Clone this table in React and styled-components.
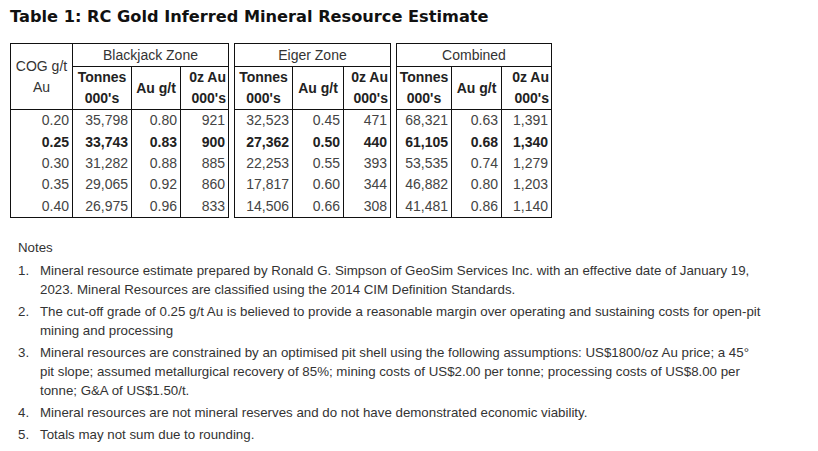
import React from "react";
import styled, { createGlobalStyle } from "styled-components";

const Global = createGlobalStyle`
  html, body { margin: 0; padding: 0; background: #fff; }
  body { font-family: "Liberation Sans", Arial, sans-serif; color: #333; }
`;

const Page = styled.div`
  width: 818px;
  height: 451px;
  box-sizing: border-box;
  padding: 6px 0 0 10px;
  overflow: hidden;
`;

const Title = styled.h1`
  margin: 0;
  font-family: "DejaVu Sans", Verdana, sans-serif;
  font-weight: bold;
  font-size: 16.2px;
  line-height: 22px;
  color: #111;
`;

const Tables = styled.div`
  display: flex;
  gap: 5px;
  margin-top: 15px;
  align-items: flex-start;
`;

const Table = styled.table`
  border-collapse: collapse;
  border: 1px solid #111;
  font-size: 14px;
  color: #333;
  table-layout: fixed;
`;

const Th = styled.th`
  border: 1px solid #111;
  font-weight: ${(p) => (p.$bold ? "bold" : "normal")};
  text-align: ${(p) => p.$align || "center"};
  padding: 0 2px;
  height: ${(p) => p.$h}px;
  line-height: 21px;
  vertical-align: middle;
  white-space: nowrap;
  color: ${(p) => (p.$bold ? "#222" : "#333")};
  box-sizing: border-box;
`;

const Td = styled.td`
  border-left: 1px solid #111;
  border-right: 1px solid #111;
  text-align: right;
  padding: 0 3px;
  height: 21.4px;
  line-height: 21px;
  font-weight: ${(p) => (p.$bold ? "bold" : "normal")};
  color: ${(p) => (p.$bold ? "#222" : "#444")};
`;

const Notes = styled.div`
  margin-top: 20px;
  padding-left: 8px;
  font-size: 13.3px;
  color: #333;
  line-height: 19px;
`;

const NotesHead = styled.div`
  margin-bottom: 4px;
`;

const List = styled.div`
  display: flex;
  flex-direction: column;
  gap: 3px;
  width: 747px;
`;

const Item = styled.div`
  display: flex;
`;

const Num = styled.span`
  flex: 0 0 22px;
`;

const Text = styled.span`
  flex: 1;
`;

const rows = [
  ["0.20", "35,798", "0.80", "921", "32,523", "0.45", "471", "68,321", "0.63", "1,391"],
  ["0.25", "33,743", "0.83", "900", "27,362", "0.50", "440", "61,105", "0.68", "1,340", true],
  ["0.30", "31,282", "0.88", "885", "22,253", "0.55", "393", "53,535", "0.74", "1,279"],
  ["0.35", "29,065", "0.92", "860", "17,817", "0.60", "344", "46,882", "0.80", "1,203"],
  ["0.40", "26,975", "0.96", "833", "14,506", "0.66", "308", "41,481", "0.86", "1,140"],
];

const notes = [
  "Mineral resource estimate prepared by Ronald G. Simpson of GeoSim Services Inc. with an effective date of January 19, 2023. Mineral Resources are classified using the 2014 CIM Definition Standards.",
  "The cut-off grade of 0.25 g/t Au is believed to provide a reasonable margin over operating and sustaining costs for open-pit mining and processing",
  "Mineral resources are constrained by an optimised pit shell using the following assumptions: US$1800/oz Au price; a 45° pit slope; assumed metallurgical recovery of 85%; mining costs of US$2.00 per tonne; processing costs of US$8.00 per tonne; G&A of US$1.50/t.",
  "Mineral resources are not mineral reserves and do not have demonstrated economic viability.",
  "Totals may not sum due to rounding.",
];

const ZoneTable = ({ name, widths, cols, withCog }) => (
  <Table>
    <colgroup>
      {widths.map((w, i) => (
        <col key={i} style={{ width: w }} />
      ))}
    </colgroup>
    <thead>
      <tr>
        {withCog && (
          <Th rowSpan={2} $h={23}>
            COG g/t
            <br />
            Au
          </Th>
        )}
        <Th colSpan={3} $h={23}>
          {name}
        </Th>
      </tr>
      <tr>
        <Th $bold $h={42}>
          Tonnes
          <br />
          000's
        </Th>
        <Th $bold $h={42}>
          Au g/t
        </Th>
        <Th $bold $align="right" $h={42}>
          0z Au
          <br />
          000's
        </Th>
      </tr>
    </thead>
    <tbody>
      {rows.map((r, i) => (
        <tr key={i}>
          {cols.map((c) => (
            <Td key={c} $bold={r[10]}>
              {r[c]}
            </Td>
          ))}
        </tr>
      ))}
    </tbody>
  </Table>
);

export default function App() {
  return (
    <Page>
      <Global />
      <Title>Table 1: RC Gold Inferred Mineral Resource Estimate</Title>
      <Tables>
        <ZoneTable
          name="Blackjack Zone"
          withCog
          widths={[62, 59, 49, 48]}
          cols={[0, 1, 2, 3]}
        />
        <ZoneTable name="Eiger Zone" widths={[58, 51, 47]} cols={[4, 5, 6]} />
        <ZoneTable name="Combined" widths={[55, 50, 50]} cols={[7, 8, 9]} />
      </Tables>
      <Notes>
        <NotesHead>Notes</NotesHead>
        <List>
          {notes.map((n, i) => (
            <Item key={i}>
              <Num>{i + 1}.</Num>
              <Text>{n}</Text>
            </Item>
          ))}
        </List>
      </Notes>
    </Page>
  );
}
